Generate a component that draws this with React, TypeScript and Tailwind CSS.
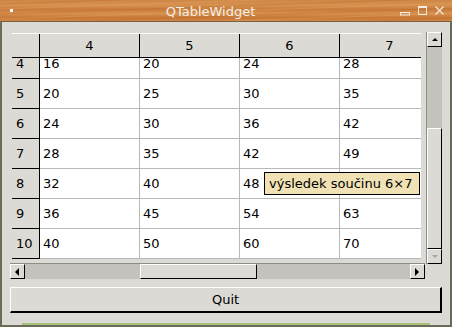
import React from "react";

const cols = [4, 5, 6, 7];
const rows = [4, 5, 6, 7, 8, 9, 10];

function Arrow({ dir }: { dir: "up" | "down" | "left" | "right" }) {
  const pts: Record<string, string> = {
    up: "1,4 4,1 7,4",
    down: "1,1 4,4 7,1",
    left: "4,0 0,4 4,8",
    right: "0,0 4,4 0,8",
  };
  const size = dir === "up" || dir === "down" ? { w: 8, h: 5 } : { w: 5, h: 8 };
  return (
    <svg width={size.w} height={size.h} viewBox={`0 0 ${size.w} ${size.h}`}>
      <polygon points={pts[dir]} fill={dir === "down" ? "#a8a6a0" : "#000"} />
    </svg>
  );
}

function ScrollButton({ dir }: { dir: "up" | "down" | "left" | "right" }) {
  return (
    <div className="flex items-center justify-center w-[15px] h-[15px] shrink-0 bg-[#dcdad5] border-t border-l border-white border-r border-b border-r-black border-b-black">
      <Arrow dir={dir} />
    </div>
  );
}

export default function App() {
  return (
    <div
      className="w-[452px] h-[327px] flex flex-col bg-[#dcdad5] overflow-hidden"
      style={{ fontFamily: '"DejaVu Sans", "Liberation Sans", sans-serif' }}
    >
      {/* title bar */}
      <div className="relative h-[22px] shrink-0 flex items-center bg-[linear-gradient(180deg,#cf8646_0%,#d7924f_25%,#c97b3b_45%,#d6904e_65%,#c77636_85%,#d08747_100%)] border-b border-[#7a6040]">
        <div className="absolute inset-0 opacity-40 bg-[repeating-linear-gradient(178deg,transparent_0px,transparent_3px,#b9682c_4px,transparent_5px,transparent_8px,#e4a462_9px,transparent_10px)]" />
        <div className="relative ml-[10px] w-[3px] h-[3px] bg-white" />
        <div className="relative flex-1 text-center text-[13px] text-[#f4eee6] leading-none pt-[1px] pl-[8px]">
          QTableWidget
        </div>
        <div className="relative flex items-center h-[22px] pr-[8px]">
          <svg width="10" height="4" viewBox="0 0 10 4" className="mt-[6px]">
            <rect x="0.5" y="0.5" width="9" height="2.5" fill="none" stroke="#f4ece2" strokeWidth="1" />
          </svg>
          <svg width="9" height="9" viewBox="0 0 9 9" className="ml-[8px]">
            <rect x="0.5" y="0.5" width="8" height="8" fill="none" stroke="#f4ece2" strokeWidth="1" />
            <line x1="0.5" y1="1.5" x2="8.5" y2="1.5" stroke="#f4ece2" />
          </svg>
          <svg width="9" height="9" viewBox="0 0 9 9" className="ml-[8px]">
            <path d="M0.5 0.5 L8.5 8.5 M8.5 0.5 L0.5 8.5" stroke="#f4ece2" strokeWidth="1.1" />
          </svg>
        </div>
      </div>

      {/* body */}
      <div className="flex-1 flex flex-col border-x-2 border-[#6b6b57] px-[8px] pt-[11px]">
        <div className="flex">
          <div className="w-[416px] flex flex-col">
            {/* table */}
            <div className="relative h-[227px] pl-[2px] pr-[5px]">
              <div className="w-[409px] h-[226px] overflow-hidden text-[13px] text-black">
                <div className="flex h-[25px] border-t border-white border-b border-b-black bg-[#dcdad5] w-max">
                  <div className="w-[28px] border-r border-black" />
                  {cols.map((c) => (
                    <div key={c} className="w-[100px] flex items-center justify-center border-r border-black">
                      {c}
                    </div>
                  ))}
                </div>
                <div className="h-[201px] overflow-hidden">
                  <div className="-mt-[9px]">
                    {rows.map((r) => (
                      <div key={r} className="flex h-[30px] w-max">
                        <div className="w-[28px] flex items-center pl-[4px] bg-[#dcdad5] border-r border-black border-b border-b-[#000]">
                          {r}
                        </div>
                        {cols.map((c) => (
                          <div
                            key={c}
                            className="w-[100px] flex items-center pl-[3px] bg-white border-r border-b border-[#b8b8b8]"
                          >
                            {r === 8 && c === 7 ? "" : r * c}
                          </div>
                        ))}
                      </div>
                    ))}
                  </div>
                </div>
              </div>
              {/* tooltip */}
              <div className="absolute left-[254px] top-[139px] w-[156px] h-[23px] flex items-center pl-[4px] bg-[#f0e2b4] border border-black text-[13px] text-black whitespace-nowrap">
                výsledek součinu 6×7
              </div>
            </div>
            {/* horizontal scrollbar */}
            <div className="mt-[3px] w-[415px] h-[16px] flex items-center border-t border-[#8f8d87] bg-[#c4c2bc]">
              <ScrollButton dir="left" />
              <div className="flex-1 flex h-[15px]">
                <div className="w-[115px]" />
                <div className="w-[117px] bg-[#dcdad5] border-t border-l border-white border-r border-b border-r-black border-b-black" />
              </div>
              <ScrollButton dir="right" />
            </div>
          </div>
          {/* vertical scrollbar */}
          <div className="-mt-[1px] w-[16px] h-[232px] flex flex-col border-l border-[#8f8d87] bg-[#c4c2bc]">
            <ScrollButton dir="up" />
            <div className="flex-1 flex flex-col">
              <div className="h-[81px]" />
              <div className="flex-1 bg-[#dcdad5] border-t border-l border-white border-r border-b border-r-black border-b-black" />
            </div>
            <ScrollButton dir="down" />
          </div>
        </div>

        {/* quit button */}
        <button className="mt-[8px] w-[432px] h-[26px] flex items-center justify-center text-[13px] text-black bg-[#dcdad5] border-t border-l border-white border-r-2 border-b-2 border-r-black border-b-black">
          Quit
        </button>
        <div className="flex-1" />
        <div className="h-[2px] mx-[12px] bg-[#a8c27a]" />
      </div>
      <div className="h-[2px] shrink-0 bg-[#6b6b57]" />
    </div>
  );
}
